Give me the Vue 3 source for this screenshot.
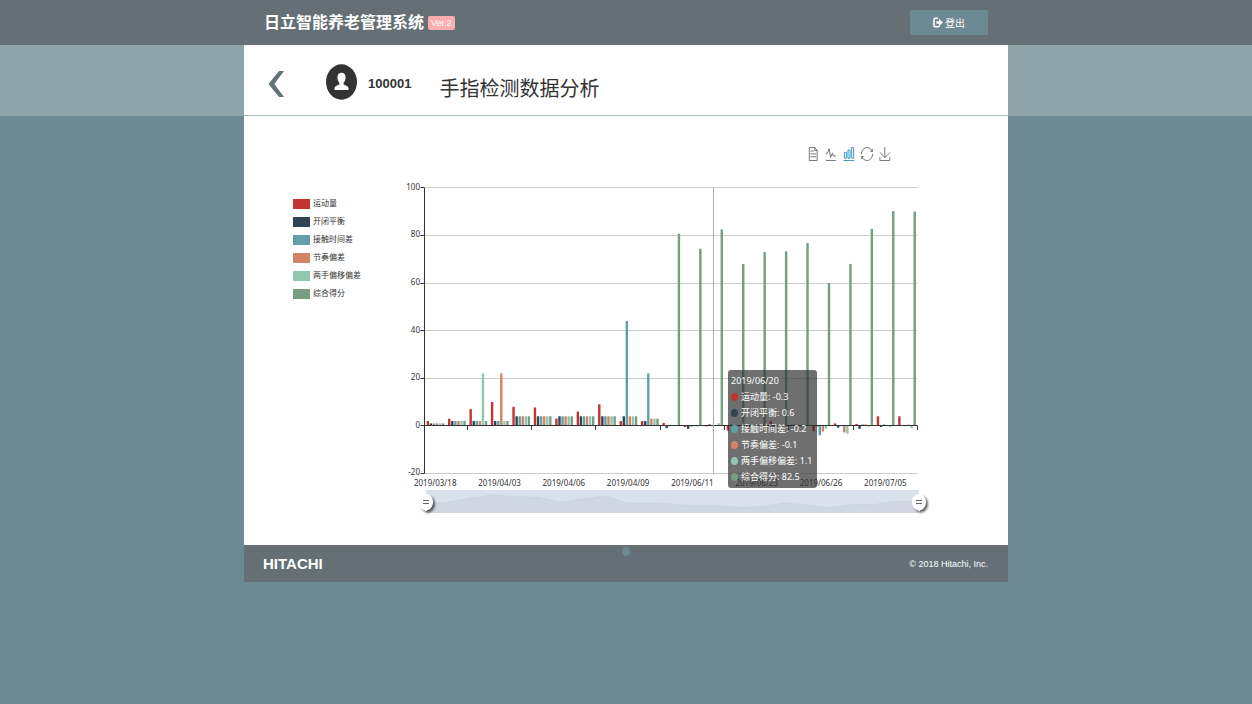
<script setup>
const series = [
  { name: '运动量', color: '#c23531', tip: '-0.3', data: [2, 3, 7, 10, 8, 7.7, 3, 6, 9, 2, 2, 1.2, -0.5, -0.3, -2, -1, 2, 0.5, -2.3, 1, 0.8, 4, 4] },
  { name: '开闭平衡', color: '#2f4554', tip: '0.6', data: [1, 2, 2, 2, 4, 4, 4, 4, 4, 4, 2, -1, -1.3, 0.6, 0.5, 0.6, -0.4, 0.5, -0.3, -0.8, -1.3, -0.5, 0] },
  { name: '接触时间差', color: '#61a0a8', tip: '-0.2', data: [1, 2, 2, 2, 4, 4, 4, 4, 4, 44, 22, -0.2, -0.4, -0.2, -0.5, 0.4, 0.3, 0.4, -4, 0.3, 0.6, 0.6, -0.2] },
  { name: '节奏偏差', color: '#d48265', tip: '-0.1', data: [1, 2, 2, 22, 4, 4, 4, 4, 4, 4, 3, -0.1, -0.2, -0.1, 0.3, -0.3, 0.2, -0.5, -2.4, -2.8, 0.6, 0.3, 0.5] },
  { name: '两手偏移偏差', color: '#91c7ae', tip: '1.1', data: [1, 2, 22, 2, 4, 4, 4, 4, 4, 4, 3, 0.2, -0.3, 1.1, 0.4, 0.5, -0.5, 0.6, -1.3, -3.3, -0.4, -0.5, -1] },
  { name: '综合得分', color: '#749f83', tip: '82.5', data: [1, 2, 2, 2, 4, 4, 4, 4, 4, 4, 3, 80.7, 74.4, 82.5, 68, 73, 73.3, 76.8, 60, 68, 82.7, 90.2, 90] },
]
const dates = ['2019/03/18', '2019/04/03', '2019/04/06', '2019/04/09', '2019/06/11', '2019/06/23', '2019/06/26', '2019/07/05']
const plot = { left: 30.5, right: 523.5, top: 12, bottom: 297.5, zero: 249.8 }
const band = (plot.right - plot.left) / 23
const unit = 2.38
const gridValues = [100, 80, 60, 40, 20, 0, -20]
const y = (v) => plot.zero - v * unit
const crisp = (v) => Math.floor(y(v)) + 0.5
const bars = series.flatMap((s, k) =>
  s.data.map((v, i) => ({
    x: plot.left + i * band + 2.1 + k * 3.07,
    y: v >= 0 ? y(v) : plot.zero,
    h: Math.abs(v) * unit,
    color: s.color,
  }))
)
const ticks = [0, 2, 5, 8, 11, 14, 17, 20, 23].map((i) => Math.floor(plot.left + i * band) + 0.5)
const trend = series[0].data.map((v, i) => `${32 + (i * 493) / 22},${329.4 - v * 1.07}`).join(' ')

const tools = [
  { label: '数据视图', d: 'M17.5,17.3H33M45.4,29.5h-28M11.5,2v56H51V14.8L38.4,2H11.5zM38.4,2.2v12.7H51M45.4,41.7h-28' },
  { label: '切换为折线图', d: 'M4.1,28.9h7.1l9.3-22l7.4,38l9.7-19.7l3,12.8h14.9M4.1,58h51.4' },
  { label: '切换为柱状图', active: true, d: 'M6.7,22.9h10V48h-10V22.9zM24.9,13h10v35h-10V13zM43.2,2h10v46h-10V2zM3.1,58h53.7' },
  { label: '还原', d: 'M47,18.9h9.8V8.7M56.3,20.1C52.1,9,40.5,0.6,26.8,2.1C12.6,3.7,1.6,16.2,2.1,30.6M13,41.1H3.1v10.2M3.7,39.9c4.2,11.1,15.8,19.5,29.5,18c14.2-1.6,25.2-14.1,24.7-28.5' },
  { label: '保存为图片', d: 'M4.7,22.9L29.3,45.5L54.7,23.4M4.6,43.6L4.6,58L53.8,58L53.8,43.6M29.2,45.1L29.2,0' },
]
</script>

<template>
  <div class="page">
    <header class="topbar">
      <div class="container topbar-inner">
        <h1 class="brand">日立智能养老管理系统</h1>
        <span class="version">Ver.2</span>
        <button class="logout" type="button">
          <svg width="10" height="11" viewBox="0 0 10 11" aria-hidden="true">
            <path d="M5 1.200H2.600Q1 1.200 1 3v5q0 1.800 1.600 1.800H5q1.200 0 1.400-1.100" fill="none" stroke="#fff" stroke-width="1.600" />
            <path d="M3.400 4.200H6V1.800L10 5.500L6 9.200V6.800H3.400z" fill="#fff" />
          </svg>
          <span>登出</span>
        </button>
      </div>
    </header>

    <div class="band">
      <div class="container heading">
        <a class="back" href="#" aria-label="返回">
          <svg width="18" height="28" viewBox="0 0 18 28"><path d="M12 1H17L7.300 14L17 27H12L1.500 14z" fill="#647278" /></svg>
        </a>
        <svg class="avatar" width="31" height="36" viewBox="0 0 31 36" aria-hidden="true">
          <ellipse cx="15.500" cy="18" rx="15.500" ry="17.700" fill="#333" />
          <path d="M15.500 8.800c-2.700 0-4.100 2-4.100 4.700c0 2.200.9 4.200 2 5.200v1.700c-2.900 1.100-4.900 2-4.900 3.800V26h14v-1.800c0-1.800-2-2.700-4.900-3.800v-1.700c1.100-1 2-3 2-5.200c0-2.700-1.400-4.700-4.100-4.700z" fill="#fff" />
        </svg>
        <span class="user-id">100001</span>
        <h2 class="title">手指检测数据分析</h2>
      </div>
    </div>

    <main class="container panel">
      <div class="tools">
        <button v-for="t in tools" :key="t.label" type="button" class="tool" :class="{ active: t.active }" :aria-label="t.label">
          <svg viewBox="0 0 60 60" preserveAspectRatio="none"><path :d="t.d" /></svg>
        </button>
      </div>

      <div class="analysis">
        <ul class="legend">
          <li v-for="s in series" :key="s.name">
            <button type="button"><i :style="{ background: s.color }"></i><span>{{ s.name }}</span></button>
          </li>
        </ul>

        <div class="chart">
          <svg class="canvas" viewBox="0 0 544 342">
            <g stroke="#ccc">
              <line v-for="v in gridValues" :key="v" :x1="plot.left" :x2="plot.right" :y1="crisp(v)" :y2="crisp(v)" />
            </g>
            <rect v-for="(b, i) in bars" :key="i" :x="b.x" :y="b.y" width="2.4" :height="b.h" :fill="b.color" />
            <g stroke="#333">
              <line :x1="plot.left" :x2="plot.left" :y1="plot.top" :y2="plot.bottom" />
              <line :x1="plot.left" :x2="plot.right" :y1="crisp(0)" :y2="crisp(0)" />
              <line v-for="v in gridValues" :key="v" :x1="plot.left - 4" :x2="plot.left" :y1="crisp(v)" :y2="crisp(v)" />
              <line v-for="t in ticks" :key="t" :x1="t" :x2="t" :y1="plot.zero" :y2="plot.zero + 4" />
            </g>
            <line x1="319.5" x2="319.5" :y1="plot.top" :y2="plot.bottom" stroke="#aaa" />
            <g class="axis-text">
              <text v-for="v in gridValues" :key="v" x="26" :y="y(v) + 2" text-anchor="end">{{ v }}</text>
              <text v-for="(d, i) in dates" :key="d" :x="plot.left + (i * 3 + 0.5) * band" y="310" text-anchor="middle">{{ d }}</text>
            </g>

            <rect x="32" y="314" width="493" height="23" fill="#dae1eb" />
            <polygon :points="`32,337 ${trend} 525,337`" fill="#d0d7e1" />
            <polyline :points="trend" fill="none" stroke="#c6ced9" stroke-width="0.6" />
            <g v-for="x in [32, 525]" :key="x" class="handle">
              <path :d="`M${x} 318c-4 0-7 3.500-7 8s3 8 6 8.200l1 1.300l1-1.300c3-.2 6-3.700 6-8.200s-3-8-7-8z`" fill="#fff" />
              <path :d="`M${x - 3} 324.5h6M${x - 3} 327.5h6`" stroke="#666" />
            </g>
          </svg>

          <div class="tooltip" role="tooltip">
            <div>2019/06/20</div>
            <div v-for="s in series" :key="s.name"><i :style="{ background: s.color }"></i>{{ s.name }}: {{ s.tip }}</div>
          </div>
        </div>
      </div>
    </main>

    <footer class="container footer">
      <strong class="logo">HITACHI</strong>
      <i class="dot"></i>
      <small class="copyright">© 2018 Hitachi, Inc.</small>
    </footer>
  </div>
</template>

<style>
body {
  background: #6d8993;
}
</style>

<style scoped>
.page {
  font-family: "Liberation Sans", "Noto Sans CJK SC", sans-serif;
  color: #333;
}
button {
  border: 0;
  padding: 0;
  background: none;
  font-family: inherit;
}
h1, h2, ul {
  margin: 0;
  padding: 0;
}
.container {
  box-sizing: border-box;
  width: 100%;
  max-width: 764px;
  margin: 0 auto;
}
.topbar {
  background: #647075;
}
.topbar-inner {
  display: flex;
  align-items: center;
  height: 45px;
  padding: 0 20px;
}
.brand {
  color: #fff;
  font-size: 16px;
  line-height: 24px;
}
.version {
  margin-left: 4px;
  padding: 0 3px;
  border-radius: 2px;
  background: #f9adb0;
  color: #fff;
  font-size: 9px;
  line-height: 14px;
}
.logout {
  display: flex;
  align-items: center;
  justify-content: center;
  gap: 2px;
  width: 78px;
  height: 25px;
  margin-left: auto;
  border-radius: 2px;
  background: #6d8993;
  color: #fff;
  font-size: 10px;
}
.band {
  background: #8da5a9;
}
.heading {
  display: flex;
  align-items: center;
  height: 71px;
  padding: 0 23px;
  border-bottom: 1px solid #a9bec2;
  background: #fff;
}
.back {
  display: flex;
  margin-top: 8px;
}
.avatar {
  margin: 4px 11px 0 41px;
}
.user-id {
  margin-top: 6px;
  font-size: 13px;
  font-weight: bold;
}
.title {
  margin: 17px 0 0 28px;
  font-size: 20px;
  font-weight: normal;
  line-height: 28px;
}
.panel {
  padding: 31px 0 27px;
  background: #fff;
}
.tools {
  display: flex;
  justify-content: flex-end;
  gap: 6px;
  padding-right: 117px;
}
.tool {
  width: 12px;
  height: 14px;
}
.tool svg {
  display: block;
  width: 12px;
  height: 14px;
}
.tool path {
  fill: none;
  stroke: #777;
  stroke-width: 1px;
  vector-effect: non-scaling-stroke;
}
.tool.active path {
  stroke: #3e98c5;
}
.analysis {
  display: grid;
  grid-template-columns: 150px 1fr 70px;
  margin-top: 15px;
}
.legend {
  padding: 19px 0 0 49px;
  list-style: none;
}
.legend li {
  height: 18px;
}
.legend button {
  display: flex;
  align-items: center;
  gap: 3px;
  height: 18px;
  color: #333;
  font-size: 8px;
  white-space: nowrap;
}
.legend i {
  width: 17px;
  height: 10px;
}
.legend span {
  padding-bottom: 3px;
}
.chart {
  position: relative;
}
.canvas {
  display: block;
  width: 100%;
}
.axis-text {
  fill: #333;
  font-family: "Noto Sans", sans-serif;
  font-size: 8px;
}
.handle {
  filter: drop-shadow(2px 2px 1px rgba(0, 0, 0, 0.6));
}
.tooltip {
  position: absolute;
  left: 334px;
  top: 194px;
  min-width: 83px;
  padding: 3px;
  border-radius: 3px;
  background: rgba(50, 50, 50, 0.7);
  color: #fff;
  font-family: "Noto Sans", "Noto Sans CJK SC", sans-serif;
  font-size: 9px;
  line-height: 16px;
  white-space: nowrap;
}
.tooltip i {
  display: inline-block;
  width: 7px;
  height: 8px;
  margin-right: 3px;
  border-radius: 50%;
  vertical-align: -1px;
}
.footer {
  position: relative;
  display: flex;
  align-items: center;
  justify-content: space-between;
  height: 37px;
  padding: 0 20px 0 19px;
  background: #647075;
  color: #fff;
}
.logo {
  font-size: 15px;
}
.dot {
  position: absolute;
  left: 50%;
  top: 2px;
  width: 8px;
  height: 9px;
  margin-left: -4px;
  border-radius: 50%;
  background: #6d8993;
}
.copyright {
  font-size: 9px;
}
</style>
